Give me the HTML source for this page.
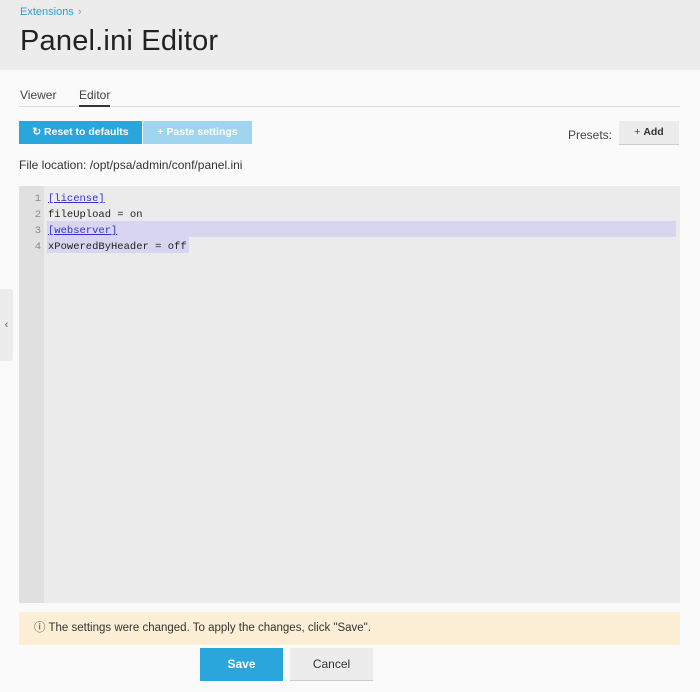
<!DOCTYPE html>
<html><head><meta charset="utf-8"><style>
*{margin:0;padding:0;box-sizing:border-box}
body{width:700px;height:692px;background:#fafafa;font-family:"Liberation Sans",sans-serif;position:relative;overflow:hidden;color:#333}
.hdr{position:absolute;left:0;top:0;width:700px;height:70px;background:#ececec}
.crumb{position:absolute;left:20px;top:6px;font-size:11px;color:#2d9fd0}
.crumb span{color:#999;margin-left:4px}
h1{position:absolute;left:20px;top:25px;font-size:29px;font-weight:normal;color:#222;letter-spacing:0.2px}
.tabs{position:absolute;left:19px;top:86px;width:661px;height:21px;border-bottom:1px solid #ddd;font-size:12px;color:#444}
.tab{position:absolute;top:2px}
.tab.act{border-bottom:2px solid #333;padding-bottom:3px}
.btn{position:absolute;font-size:10.5px;font-weight:bold;color:#fff;text-align:center;line-height:23px}
.ed{position:absolute;left:19px;top:186px;width:661px;height:417px;background:#ebebeb}
.gut{position:absolute;left:0;top:0;width:25px;height:417px;background:#e0e0e0}
.ln{position:absolute;font-family:"Liberation Mono",monospace;font-size:10.5px;line-height:16px}
.num{left:0;width:22px;text-align:right;color:#888}
.code{left:29px;color:#222}
a{color:#3333cc}
.note{position:absolute;left:19px;top:612px;width:661px;height:33px;background:#fdefd5;font-size:11.5px;line-height:33px;padding-left:15px;color:#333}
</style></head><body>
<div class="hdr"></div>
<div class="crumb">Extensions<span>›</span></div>
<h1>Panel.ini Editor</h1>
<div class="tabs"><div class="tab" style="left:1px">Viewer</div><div class="tab act" style="left:60px">Editor</div></div>
<div class="btn" style="left:19px;top:121px;width:123px;background:#2aa6dc">&#x21bb; Reset to defaults</div>
<div class="btn" style="left:143px;top:121px;width:109px;background:#9fd5ee">+ Paste settings</div>
<div style="position:absolute;left:568px;top:128px;font-size:12px;color:#444">Presets:</div>
<div class="btn" style="left:619px;top:121px;width:60px;background:#ececec;color:#333;font-weight:normal;border-bottom:1px solid #ccc">+ <b>Add</b></div>
<div style="position:absolute;left:19px;top:158px;font-size:12px;color:#333">File location: /opt/psa/admin/conf/panel.ini</div>
<div class="ed"><div class="gut"></div>
<div style="position:absolute;left:28px;top:35px;width:629px;height:16px;background:#d8d5f0"></div>
<div style="position:absolute;left:28px;top:51px;width:142px;height:16px;background:#d8d5f0"></div>
<div class="ln num" style="top:5px">1<br>2<br>3<br>4</div>
<div class="ln code" style="top:5px"><a><u>[license]</u></a><br>fileUpload = on<br><a><u>[webserver]</u></a><br>xPoweredByHeader = off</div>
</div>
<div style="position:absolute;left:0;top:289px;width:13px;height:72px;background:#ececec;border-radius:0 3px 3px 0;font-size:11px;line-height:72px;text-align:center;color:#555">‹</div>
<div class="note">ⓘ The settings were changed. To apply the changes, click "Save".</div>
<div class="btn" style="left:200px;top:648px;width:83px;height:33px;line-height:33px;font-size:12px;background:#2aa6dc">Save</div>
<div class="btn" style="left:290px;top:648px;width:83px;height:33px;line-height:33px;font-size:12px;background:#ececec;color:#333;font-weight:normal;border-bottom:1px solid #ccc">Cancel</div>
</body></html>
